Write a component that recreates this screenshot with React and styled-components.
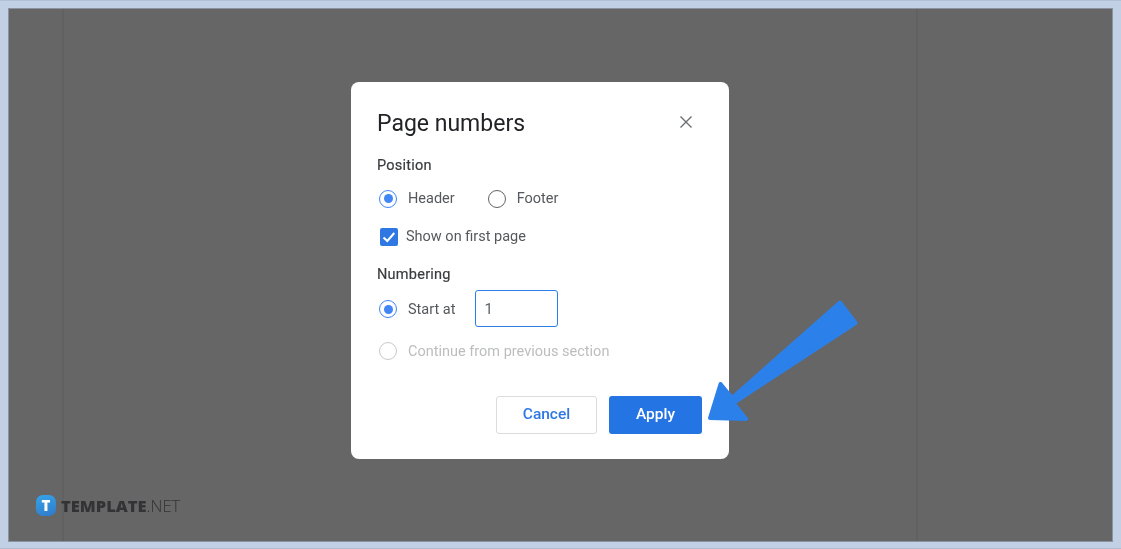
import React from "react";
import styled, { createGlobalStyle } from "styled-components";

const Global = createGlobalStyle`
  html, body { margin: 0; padding: 0; width: 1121px; height: 549px; overflow: hidden; background: #c1d0e5; }
  * { box-sizing: border-box; }
  body { font-family: Roboto, "Noto Sans", sans-serif; }
`;

const Frame = styled.div`
  position: relative;
  width: 1121px;
  height: 549px;
  padding: 8px 8px 7px 9px;
  background: #c1d0e5;
  border-bottom: 1px solid #b0bccd;
  border-top: 1px solid #b3c0d4;
  filter: blur(0.35px);
`;

const Stage = styled.div`
  position: relative;
  width: 1103px;
  height: 532px;
  background: #666666;
  padding: 73px 0 0 342px;
  box-shadow: 0 0 0 1px #8b93a0;
`;

const PageEdge = styled.div`
  position: absolute;
  top: 0;
  bottom: 0;
  left: ${p => p.$left}px;
  width: 2px;
  background: #616161;
`;

const Dialog = styled.div`
  position: relative;
  width: 378px;
  height: 377px;
  background: #fff;
  border-radius: 8px;
  padding: 25px 27px 25px 26px;
  display: flex;
  flex-direction: column;
`;

const TitleRow = styled.div`
  display: flex;
  align-items: center;
  justify-content: space-between;
  height: 30px;
`;

const Title = styled.h2`
  margin: 3px 0 0;
  font: 400 23px/30px Roboto, sans-serif;
  color: #222326;
`;

const Close = styled.svg`
  width: 14px;
  height: 14px;
  margin-right: 9px;
  stroke: #6b6e72;
  stroke-width: 1.4;
  fill: none;
`;

const SectionLabel = styled.div`
  font: 400 14.5px/18px Roboto, sans-serif;
  letter-spacing: 0.25px;
  -webkit-text-stroke: 0.2px #3a3c3f;
  color: #3a3c3f;
  margin-top: ${p => p.$top}px;
`;

const Row = styled.div`
  display: flex;
  align-items: center;
  margin-top: ${p => p.$top}px;
  height: ${p => p.$h || 20}px;
`;

const RadioCircle = styled.span`
  flex: none;
  position: relative;
  top: ${p => p.$nudge || 0}px;
  width: 18px;
  height: 18px;
  margin-left: 2px;
  border-radius: 50%;
  border: 1.5px solid ${p => p.$on ? "#4285f4" : p.$off ? "#c9c9c9" : "#5f6368"};
  display: flex;
  align-items: center;
  justify-content: center;
  &::after {
    content: "";
    width: 9px;
    height: 9px;
    border-radius: 50%;
    background: ${p => p.$on ? "#4285f4" : "transparent"};
  }
`;

const OptionText = styled.span`
  font: 400 14.5px/18px Roboto, sans-serif;
  color: ${p => p.$off ? "#bcbdbf" : "#55585c"};
  margin-left: ${p => p.$left ?? 11}px;
  position: relative;
  top: ${p => p.$nudge || 0}px;
  white-space: nowrap;
`;

const FooterRadio = styled.span`
  display: flex;
  align-items: center;
  margin-left: 31px;
`;

const CheckBox = styled.span`
  flex: none;
  width: 18px;
  height: 18px;
  margin-left: 3px;
  background: #2f78e4;
  border-radius: 2px;
  display: flex;
  align-items: center;
  justify-content: center;
`;

const NumberInput = styled.div`
  width: 83px;
  height: 37px;
  margin-left: 20px;
  border: 1.5px solid #2b7de9;
  border-radius: 3px;
  padding-left: 8px;
  font: 400 15px/36px Roboto, sans-serif;
  color: #5f6368;
`;

const Actions = styled.div`
  display: flex;
  justify-content: flex-end;
  gap: 12px;
  margin-top: 35px;
`;

const Button = styled.div`
  height: 38px;
  width: ${p => p.$w}px;
  border-radius: 3px;
  padding-bottom: 2px;
  display: flex;
  align-items: center;
  justify-content: center;
  font: 500 15.5px/18px Roboto, sans-serif;
  background: ${p => p.$primary ? "#2574e3" : "#fff"};
  color: ${p => p.$primary ? "#fff" : "#2f78e4"};
  border: ${p => p.$primary ? "none" : "1px solid #dcdcdc"};
`;

const ArrowSvg = styled.svg`
  position: absolute;
  left: 690px;
  top: 289px;
  width: 180px;
  height: 140px;
`;

const Brand = styled.div`
  position: absolute;
  left: 36px;
  top: 494px;
  display: flex;
  align-items: center;
  gap: 5px;
`;

const BrandMark = styled.span`
  width: 20px;
  height: 21px;
  border-radius: 7px;
  background: linear-gradient(160deg, #35a5ea, #2f79c9);
  color: #fff;
  font: 900 15px/21px "Open Sans", sans-serif;
  text-align: center;
`;

const BrandText = styled.span`
  font: 800 16.5px/20px "Open Sans", sans-serif;
  color: #333335;
  & > em {
    font-style: normal;
    font-weight: 300;
  }
`;

export default function App() {
  return (
    <>
      <Global />
      <Frame>
        <Stage>
          <PageEdge $left={53} />
          <PageEdge $left={907} />
          <Dialog>
            <TitleRow>
              <Title>Page numbers</Title>
              <Close viewBox="0 0 14 14"><path d="M1.5 1.5l11 11M12.5 1.5l-11 11" /></Close>
            </TitleRow>
            <SectionLabel $top={20}>Position</SectionLabel>
            <Row $top={14}>
              <RadioCircle $on />
              <OptionText>Header</OptionText>
              <FooterRadio>
                <RadioCircle />
                <OptionText>Footer</OptionText>
              </FooterRadio>
            </Row>
            <Row $top={19}>
              <CheckBox>
                <svg width="14" height="14" viewBox="0 0 14 14" fill="none" stroke="#fff" strokeWidth="2"><path d="M1.5 7.5l3.8 3.5 7-8" /></svg>
              </CheckBox>
              <OptionText $left={8}>Show on first page</OptionText>
            </Row>
            <SectionLabel $top={19}>Numbering</SectionLabel>
            <Row $top={6} $h={37}>
              <RadioCircle $on $nudge={1} />
              <OptionText $nudge={2}>Start at</OptionText>
              <NumberInput>1</NumberInput>
            </Row>
            <Row $top={15}>
              <RadioCircle $off />
              <OptionText $off $nudge={1}>Continue from previous section</OptionText>
            </Row>
            <Actions>
              <Button $w={101}>Cancel</Button>
              <Button $w={93} $primary>Apply</Button>
            </Actions>
          </Dialog>
        </Stage>
        <ArrowSvg viewBox="0 0 180 140">
          <path
            d="M150 12.5 L165.5 33 L43.5 113 L56 129 L20 128 L30.5 94 L42 108 Z"
            fill="#2b80ea"
            stroke="#2b80ea"
            strokeWidth="4"
            strokeLinejoin="round"
          />
        </ArrowSvg>
        <Brand>
          <BrandMark>T</BrandMark>
          <BrandText>TEMPLATE<em>.NET</em></BrandText>
        </Brand>
      </Frame>
    </>
  );
}
